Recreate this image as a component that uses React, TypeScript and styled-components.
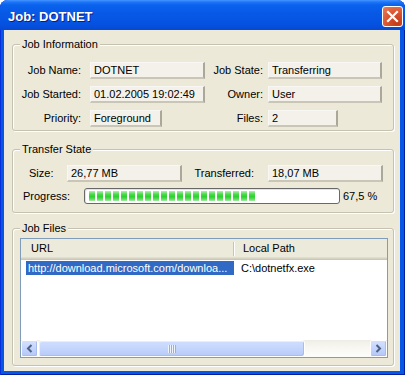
import React from "react";
import styled, { createGlobalStyle } from "styled-components";

const Global = createGlobalStyle`
  html, body { margin: 0; padding: 0; background: #fff; }
  body { font-family: "Liberation Sans", Arial, sans-serif; font-size: 11px; color: #000; }
`;

const Window = styled.div`
  width: 405px;
  height: 375px;
  display: flex;
  flex-direction: column;
  border-radius: 8px 8px 0 0;
  background: #0856E4;
  box-shadow: inset 1px 0 0 #0831D9, inset -1px 0 0 #001EA0, inset 0 -1px 0 #001EA0;
`;

const TitleBar = styled.div`
  height: 30px;
  flex: none;
  display: flex;
  align-items: center;
  justify-content: space-between;
  padding: 0 2px 0 8px;
  border-radius: 8px 8px 0 0;
  background: linear-gradient(180deg, #4595FF 0, #2076F8 2px, #0A62EC 5px, #0858E6 45%, #0652E0 80%, #0548D4 100%);
`;

const Title = styled.span`
  color: #fff;
  font: bold 13px "Liberation Sans", Arial, sans-serif;
  text-shadow: 1px 1px 0 #0A1E80;
  padding-top: 2px;
`;

const CloseBtn = styled.div`
  width: 21px;
  height: 21px;
  box-sizing: border-box;
  border: 1px solid #fff;
  border-radius: 3px;
  margin-top: 2px;
  background: radial-gradient(circle at 75% 85%, #C23A17 0, #D9502B 45%, #EA7E5C 100%);
  display: flex;
  align-items: center;
  justify-content: center;
`;

const Client = styled.div`
  flex: 1;
  margin: 0 5px 4px 4px;
  background: #ECE9D8;
  display: flex;
  flex-direction: column;
`;

const Group = styled.div<{ $mt: number; $h: number }>`
  margin: ${(p) => p.$mt}px 0 0 8px;
  width: 382px;
  height: ${(p) => p.$h}px;
  box-sizing: border-box;
  border: 1px solid #C5C2B2;
  border-radius: 3px;
  box-shadow: inset 1px 1px 0 #fff, 1px 1px 0 #fff;
  flex: none;
`;

const GroupTitle = styled.div`
  display: table;
  margin: -7px 0 0 7px;
  padding: 0 2px;
  line-height: 13px;
  background: #ECE9D8;
`;

const InfoGrid = styled.div`
  margin-top: 11px;
  display: grid;
  grid-template-columns: 77px 115px 63px 114px;
  grid-auto-rows: 17px;
  row-gap: 7px;
`;

const Label = styled.div<{ $pr?: number; $pl?: number; $w?: number; $right?: boolean }>`
  line-height: 17px;
  white-space: nowrap;
  text-align: ${(p) => (p.$right ? "right" : "left")};
  padding-right: ${(p) => p.$pr ?? 0}px;
  padding-left: ${(p) => p.$pl ?? 0}px;
  ${(p) => (p.$w ? `width: ${p.$w}px; flex: none; box-sizing: border-box;` : "")}
`;

const Field = styled.div<{ $w: number }>`
  width: ${(p) => p.$w}px;
  height: 17px;
  box-sizing: border-box;
  flex: none;
  background: #F3F1E9;
  border-top: 1px solid #F8F7F3;
  border-left: 1px solid #F8F7F3;
  border-right: 2px solid #ACA899;
  border-bottom: 2px solid #C9C6B8;
  padding-left: 3px;
  line-height: 14px;
  white-space: nowrap;
`;

const Row = styled.div<{ $mt: number; $h: number }>`
  display: flex;
  align-items: center;
  height: ${(p) => p.$h}px;
  margin-top: ${(p) => p.$mt}px;
`;

const Progress = styled.div`
  width: 256px;
  height: 16px;
  box-sizing: border-box;
  flex: none;
  border: 1px solid #686868;
  border-radius: 3px;
  background: #fff;
  padding: 2px 4px 2px 4px;
  box-shadow: inset 1px 1px 0 #E4E4E4;
`;

const ProgressFill = styled.div`
  height: 100%;
  background:
    repeating-linear-gradient(90deg, transparent 0 6px, #fff 6px 8px),
    linear-gradient(180deg, #B4EEB4 0%, #51DB51 30%, #2ED12E 55%, #5ADB5A 80%, #A8EAA8 100%);
`;

const Pct = styled.span`
  margin-left: 3px;
  line-height: 16px;
`;

const ListView = styled.div`
  margin: 3px 0 0 7px;
  width: 368px;
  height: 120px;
  box-sizing: border-box;
  border: 1px solid #7F9DB9;
  background: #fff;
  display: flex;
  flex-direction: column;
`;

const Header = styled.div`
  height: 21px;
  flex: none;
  display: flex;
  align-items: flex-start;
  background: #EBEADB;
  box-shadow: inset 0 -1px 0 #CBC7B8, inset 0 -2px 0 #D6D2C2, inset 0 -3px 0 #E2DECD;
`;

const HeaderCell = styled.div<{ $w?: number; $pl: number }>`
  ${(p) => (p.$w ? `width: ${p.$w}px; flex: none;` : "flex: 1;")}
  box-sizing: border-box;
  padding-left: ${(p) => p.$pl}px;
  line-height: 19px;
  white-space: nowrap;
`;

const Sep = styled.div`
  width: 0;
  height: 14px;
  margin-top: 3px;
  border-left: 1px solid #C7C5B2;
  border-right: 1px solid #fff;
  flex: none;
`;

const ListRow = styled.div`
  display: flex;
  height: 14px;
  margin-top: 1px;
  line-height: 14px;
  flex: none;
`;

const Cell = styled.div<{ $w?: number; $ml: number; $pl: number; $sel?: boolean }>`
  ${(p) => (p.$w ? `width: ${p.$w}px; flex: none;` : "flex: 1;")}
  box-sizing: border-box;
  margin-left: ${(p) => p.$ml}px;
  padding-left: ${(p) => p.$pl}px;
  white-space: nowrap;
  overflow: hidden;
  background: ${(p) => (p.$sel ? "#316AC5" : "transparent")};
  color: ${(p) => (p.$sel ? "#fff" : "#000")};
`;

const Spacer = styled.div`
  flex: 1;
`;

const ScrollBar = styled.div`
  height: 17px;
  flex: none;
  display: flex;
  background: linear-gradient(180deg, #EEEDE5 0%, #F7F6F1 40%, #FDFDFA 100%);
`;

const ScrollBtn = styled.div`
  width: 17px;
  height: 17px;
  box-sizing: border-box;
  flex: none;
  border: 1px solid #fff;
  border-radius: 2px;
  background: linear-gradient(180deg, #D4E0FD 0%, #C3D4FC 50%, #B4C8F6 100%);
  box-shadow: inset -1px -1px 0 #A9BCEB;
  display: flex;
  align-items: center;
  justify-content: center;
`;

const Thumb = styled.div<{ $w: number }>`
  width: ${(p) => p.$w}px;
  height: 17px;
  box-sizing: border-box;
  flex: none;
  border: 1px solid #fff;
  border-radius: 3px;
  background: linear-gradient(180deg, #D0DDFD 0%, #C4D5FC 50%, #B7CBF8 100%);
  box-shadow: inset -1px -1px 0 #A8BDEF, inset 1px 1px 0 #E6EDFE;
  display: flex;
  align-items: center;
  justify-content: center;
`;

const Arrow = ({ dir }: { dir: "l" | "r" }) => (
  <svg width="7" height="9" viewBox="0 0 7 9">
    <path
      d={dir === "l" ? "M5.5 1 L2 4.5 L5.5 8" : "M1.5 1 L5 4.5 L1.5 8"}
      fill="none"
      stroke="#4D6185"
      strokeWidth="2"
    />
  </svg>
);

const Grip = () => (
  <svg width="8" height="8" viewBox="0 0 8 8">
    {[0, 2, 4, 6].map((x) => (
      <g key={x}>
        <rect x={x} y="0" width="1" height="8" fill="#EEF4FE" />
        <rect x={x + 1} y="0" width="1" height="8" fill="#8CB0F8" />
      </g>
    ))}
  </svg>
);

export default function App() {
  const pct = 67.5;
  return (
    <>
      <Global />
      <Window>
        <TitleBar>
          <Title>Job: DOTNET</Title>
          <CloseBtn>
            <svg width="19" height="19" viewBox="0 0 19 19">
              <path d="M5 5 L14 14 M14 5 L5 14" stroke="#fff" strokeWidth="2.2" strokeLinecap="square" />
            </svg>
          </CloseBtn>
        </TitleBar>
        <Client>
          <Group $mt={14} $h={87}>
            <GroupTitle>Job Information</GroupTitle>
            <InfoGrid>
              <Label $right $pr={9}>Job Name:</Label>
              <Field $w={115}>DOTNET</Field>
              <Label $right $pr={5}>Job State:</Label>
              <Field $w={114}>Transferring</Field>

              <Label $right $pr={9}>Job Started:</Label>
              <Field $w={115}>01.02.2005 19:02:49</Field>
              <Label $right $pr={5}>Owner:</Label>
              <Field $w={114}>User</Field>

              <Label $right $pr={9}>Priority:</Label>
              <Field $w={72}>Foreground</Field>
              <Label $right $pr={5}>Files:</Label>
              <Field $w={70}>2</Field>
            </InfoGrid>
          </Group>

          <Group $mt={18} $h={64}>
            <GroupTitle>Transfer State</GroupTitle>
            <Row $mt={9} $h={17}>
              <Label $w={54} $pl={16}>Size:</Label>
              <Field $w={115}>26,77 MB</Field>
              <Label $w={86} $right $pr={14}>Transferred:</Label>
              <Field $w={115}>18,07 MB</Field>
            </Row>
            <Row $mt={6} $h={16}>
              <Label $w={71} $pl={10}>Progress:</Label>
              <Progress>
                <ProgressFill style={{ width: `${pct}%` }} />
              </Progress>
              <Pct>67,5 %</Pct>
            </Row>
          </Group>

          <Group $mt={15} $h={138}>
            <GroupTitle>Job Files</GroupTitle>
            <ListView>
              <Header>
                <HeaderCell $w={212} $pl={10}>URL</HeaderCell>
                <Sep />
                <HeaderCell $pl={8}>Local Path</HeaderCell>
              </Header>
              <ListRow>
                <Cell $w={208} $ml={5} $pl={2} $sel>http://download.microsoft.com/downloa...</Cell>
                <Cell $ml={0} $pl={7}>C:\dotnetfx.exe</Cell>
              </ListRow>
              <Spacer />
              <ScrollBar>
                <ScrollBtn><Arrow dir="l" /></ScrollBtn>
                <Thumb $w={267}><Grip /></Thumb>
                <Spacer />
                <ScrollBtn><Arrow dir="r" /></ScrollBtn>
              </ScrollBar>
            </ListView>
          </Group>
        </Client>
      </Window>
    </>
  );
}
